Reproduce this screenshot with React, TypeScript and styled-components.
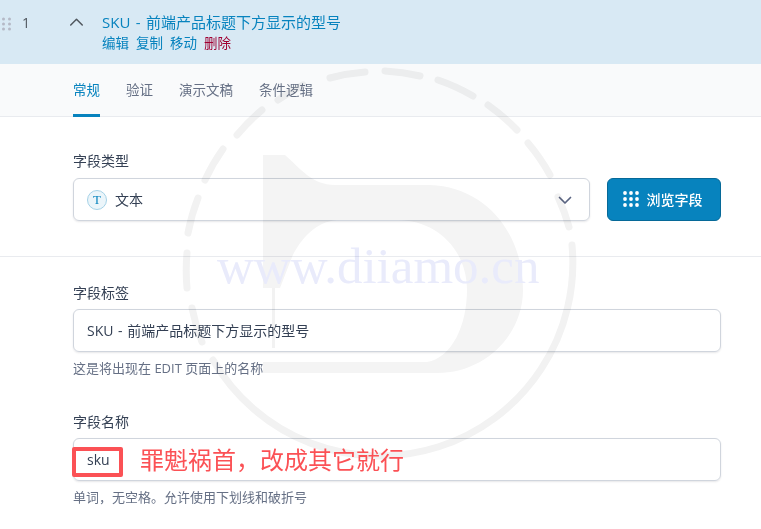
import React from "react";
import styled, { createGlobalStyle } from "styled-components";

const FONT = `"Open Sans", "Noto Sans CJK SC", sans-serif`;

const Global = createGlobalStyle`
  html, body { margin: 0; padding: 0; background: #fff; }
  body { font-family: ${FONT}; color: #1d2327; }
  * { box-sizing: border-box; }
`;

const Page = styled.div`
  position: relative;
  width: 761px;
  height: 529px;
  overflow: hidden;
  background: #fff;
`;

const Header = styled.div`
  height: 64px;
  background: #d8e9f4;
  display: flex;
  align-items: flex-start;
`;
const Grip = styled.div`
  width: 22px;
  padding: 17px 0 0 2px;
  color: #b5b9c6;
  display: flex;
`;
const Order = styled.div`
  width: 48px;
  padding-top: 13px;
  font-size: 14px;
  line-height: 20px;
  color: #50575e;
`;
const Toggle = styled.div`
  width: 32px;
  padding-top: 15px;
  color: #50575e;
  display: flex;
`;
const TitleBlock = styled.div`
  padding-top: 12px;
`;
const Title = styled.div`
  font-size: 15px;
  line-height: 21px;
  word-spacing: 1.5px;
  color: #0783be;
`;
const RowActions = styled.div`
  display: flex;
  gap: 7px;
  margin-top: 1px;
  font-size: 13.5px;
  line-height: 18px;
`;
const RowAction = styled.span<{ $danger?: boolean }>`
  color: ${(p) => (p.$danger ? "#a00032" : "#0783be")};
`;

const Tabs = styled.div`
  height: 53px;
  background: #f9fafb;
  border-bottom: 1px solid #e9ebef;
  display: flex;
  gap: 26px;
  padding-left: 73px;
`;
const Tab = styled.div<{ $active?: boolean }>`
  height: 53px;
  padding-top: 16px;
  font-size: 13.5px;
  line-height: 20px;
  color: ${(p) => (p.$active ? "#0783be" : "#667085")};
  border-bottom: 3px solid ${(p) => (p.$active ? "#0783be" : "transparent")};
`;

const Section = styled.div`
  padding: 35px 40px 0 73px;
  height: 140px;
  border-bottom: 1px solid #e9ebef;
`;
const Label = styled.div`
  font-size: 14px;
  line-height: 18px;
  color: #344054;
  margin-bottom: 7px;
`;
const FieldRow = styled.div`
  display: flex;
  gap: 17px;
  margin-top: 8px;
`;
const Select = styled.div`
  flex: 1;
  height: 43px;
  border: 1px solid #d0d5dd;
  border-radius: 6px;
  box-shadow: 0 1px 2px rgba(16, 24, 40, 0.1);
  display: flex;
  align-items: center;
  padding: 0 16px 0 13px;
  font-size: 14px;
  color: #344054;
`;
const TypeBadge = styled.span`
  width: 20px;
  height: 20px;
  border-radius: 50%;
  background: #ebf5fa;
  border: 1px solid #a5d2e7;
  color: #0783be;
  font-family: "Liberation Serif", serif;
  font-size: 13px;
  display: flex;
  align-items: center;
  justify-content: center;
  margin-right: 8px;
`;
const SelectText = styled.span`
  flex: 1;
  padding-bottom: 2px;
`;
const BrowseButton = styled.div`
  width: 114px;
  height: 43px;
  border-radius: 6px;
  background: #0783be;
  border: 1px solid #066998;
  color: #fff;
  font-size: 14px;
  font-weight: 500;
  display: flex;
  align-items: center;
  justify-content: center;
  gap: 8px;
  padding: 0 3px 2px 0;
`;
const Field = styled.div`
  margin-bottom: 36px;
`;
const FieldGroup = styled.div`
  padding: 27px 40px 0 73px;
`;
const Input = styled.div`
  height: 43px;
  border: 1px solid #d0d5dd;
  border-radius: 6px;
  box-shadow: 0 1px 2px rgba(16, 24, 40, 0.1);
  display: flex;
  align-items: center;
  padding: 0 13px 1px;
  font-size: 14px;
  word-spacing: 1px;
  color: #344054;
`;
const Help = styled.div`
  margin-top: 7px;
  font-size: 13px;
  line-height: 18px;
  color: #667085;
`;

const Watermark = styled.svg`
  position: absolute;
  inset: 0;
  pointer-events: none;
  mix-blend-mode: multiply;
`;
const WatermarkText = styled.text`
  font-family: "Liberation Serif", serif;
  font-size: 51px;
  fill: #e9ebfb;
`;
const Highlight = styled.div`
  position: absolute;
  left: 72px;
  top: 447px;
  width: 51px;
  height: 30px;
  border: 4px solid #fb5155;
  border-radius: 2px;
`;
const Note = styled.div`
  position: absolute;
  left: 140px;
  top: 443px;
  font-size: 24px;
  line-height: 34px;
  color: #fb5155;
  white-space: nowrap;
`;

const GripIcon = () => (
  <svg width="9" height="14" viewBox="0 0 9 14" fill="currentColor">
    {[1.5, 7.5].flatMap((x) =>
      [2, 7, 12].map((y) => <circle key={`${x}-${y}`} cx={x} cy={y} r="1.5" />)
    )}
  </svg>
);
const ChevronUp = () => (
  <svg width="14" height="14" viewBox="0 0 14 14" fill="none" stroke="currentColor" strokeWidth="1.5" strokeLinecap="round" strokeLinejoin="round">
    <path d="M0.75 10 L6.5 4.25 L12.25 10" />
  </svg>
);
const ChevronDown = () => (
  <svg width="16" height="16" viewBox="0 0 16 16" fill="none" stroke="#5a6482" strokeWidth="1.7" strokeLinecap="round" strokeLinejoin="round">
    <path d="M2.5 5.5 L8 11 L13.5 5.5" />
  </svg>
);
const GridIcon = () => (
  <svg width="16" height="16" viewBox="0 0 16 16" fill="#fff">
    {[2, 8, 14].flatMap((x) =>
      [2, 8, 14].map((y) => <circle key={`${x}-${y}`} cx={x} cy={y} r="1.9" />)
    )}
  </svg>
);

const RING_DASHES: [number, number, number, number][] = [
  [202, 342, 192, 308],
  [187, 288, 187, 253],
  [188, 233, 198, 198],
  [205, 180, 223, 149],
  [237, 135, 262, 110],
  [278, 100, 303, 85],
  [330, 78, 365, 72],
  [385, 71, 420, 76],
  [438, 80, 473, 96],
  [488, 105, 517, 130],
  [528, 143, 550, 175],
  [558, 197, 569, 227],
];

export default function App() {
  return (
    <Page>
      <Global />
      <Header>
        <Grip><GripIcon /></Grip>
        <Order>1</Order>
        <Toggle><ChevronUp /></Toggle>
        <TitleBlock>
          <Title>SKU - 前端产品标题下方显示的型号</Title>
          <RowActions>
            <RowAction>编辑</RowAction>
            <RowAction>复制</RowAction>
            <RowAction>移动</RowAction>
            <RowAction $danger>删除</RowAction>
          </RowActions>
        </TitleBlock>
      </Header>
      <Tabs>
        <Tab $active>常规</Tab>
        <Tab>验证</Tab>
        <Tab>演示文稿</Tab>
        <Tab>条件逻辑</Tab>
      </Tabs>
      <Section>
        <Label>字段类型</Label>
        <FieldRow>
          <Select>
            <TypeBadge>T</TypeBadge>
            <SelectText>文本</SelectText>
            <ChevronDown />
          </Select>
          <BrowseButton><GridIcon />浏览字段</BrowseButton>
        </FieldRow>
      </Section>
      <FieldGroup>
        <Field>
          <Label>字段标签</Label>
          <Input>SKU - 前端产品标题下方显示的型号</Input>
          <Help>这是将出现在 EDIT 页面上的名称</Help>
        </Field>
        <Field>
          <Label>字段名称</Label>
          <Input>sku</Input>
          <Help>单词，无空格。允许使用下划线和破折号</Help>
        </Field>
      </FieldGroup>
      <Watermark width="761" height="529" viewBox="0 0 761 529">
        <g fill="none" stroke="#f2f2f2" strokeWidth="7" strokeLinecap="round">
          {RING_DASHES.map(([x1, y1, x2, y2]) => (
            <path key={x1} d={`M${x1} ${y1} A193 193 0 0 1 ${x2} ${y2}`} />
          ))}
          <path d="M572 245 A193 193 0 0 1 213 360" />
        </g>
        <path
          fill="#f4f4f4"
          fillRule="evenodd"
          d="M263 155 H285 C300 168 312 185 335 185 H430 C485 187 523 232 523 290 C523 335 485 373 437 373 H263 V362 H427 C452 358 467 325 467 290 C467 250 437 220 397 220 H337 C315 222 300 240 292 257 L280 288 H263 Z"
        />
        <rect x="272" y="288" width="3" height="60" fill="#f2f2f2" />
        <WatermarkText x="217" y="283">www.diiamo.cn</WatermarkText>
      </Watermark>
      <Highlight />
      <Note>罪魁祸首，改成其它就行</Note>
    </Page>
  );
}
